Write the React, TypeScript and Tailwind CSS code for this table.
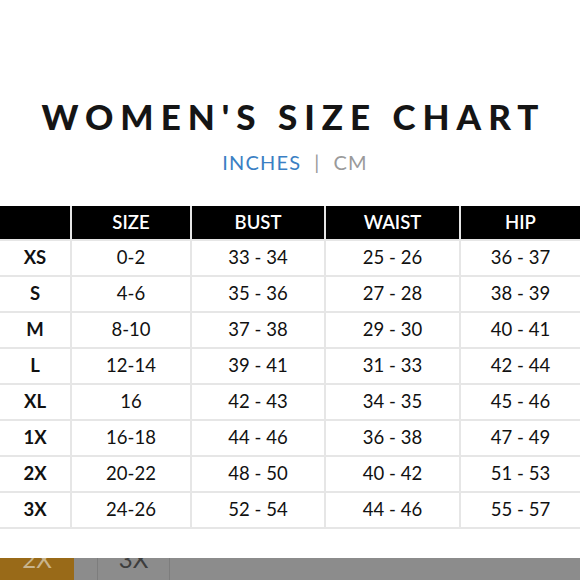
const rows = [
  ['XS', '0-2', '33 - 34', '25 - 26', '36 - 37'],
  ['S', '4-6', '35 - 36', '27 - 28', '38 - 39'],
  ['M', '8-10', '37 - 38', '29 - 30', '40 - 41'],
  ['L', '12-14', '39 - 41', '31 - 33', '42 - 44'],
  ['XL', '16', '42 - 43', '34 - 35', '45 - 46'],
  ['1X', '16-18', '44 - 46', '36 - 38', '47 - 49'],
  ['2X', '20-22', '48 - 50', '40 - 42', '51 - 53'],
  ['3X', '24-26', '52 - 54', '44 - 46', '55 - 57'],
];

const headers = ['', 'SIZE', 'BUST', 'WAIST', 'HIP'];

export default function App() {
  return (
    <div className="w-[580px] h-[580px] bg-white overflow-hidden flex flex-col font-['Lato',sans-serif]">
      {/* title */}
      <div className="pt-[96px] text-center">
        <h1 className="text-[35px] leading-[40px] font-black tracking-[0.2em] text-[#151515] pl-[0.2em]">
          WOMEN'S SIZE CHART
        </h1>
        <div className="mt-[14px] pl-[10px] text-[20px] leading-[24px] tracking-[0.06em]">
          <span className="text-[#3a7fc4]">INCHES</span>
          <span className="text-[#9a9a9a] mx-[13px]">|</span>
          <span className="text-[#9a9a9a]">CM</span>
        </div>
      </div>

      {/* table */}
      <div className="mt-[32px] grid grid-cols-[70px_118px_132px_133px_1fr] gap-[2px] bg-[#e6e6e6] pb-[2px]">
        {headers.map((h, i) => (
          <div
            key={i}
            className="h-[33px] bg-black text-white flex items-center justify-center text-[18.5px] font-semibold"
          >
            {h}
          </div>
        ))}
        {rows.map((r) =>
          r.map((c, i) => (
            <div
              key={r[0] + i}
              className={`h-[34px] bg-white text-[#111] flex items-center justify-center text-[18.5px] ${
                i === 0 ? 'font-bold' : ''
              }`}
            >
              {c}
            </div>
          ))
        )}
      </div>

      <div className="flex-1" />

      {/* bar at the bottom edge, cut off by the frame like in the screenshot */}
      <div className="h-[22px] bg-[#8c8c8c] flex overflow-hidden">
        <div className="w-[74px] bg-[#996a18] flex justify-center">
          <span className="-mt-[14px] text-[24px] leading-[30px] text-[#c8b48e]">2X</span>
        </div>
        <div className="w-[23px]" />
        <div className="w-[73px] border-x border-[#7d7d7d] flex justify-center">
          <span className="-mt-[14px] text-[24px] leading-[30px] text-[#3d3d3d]">3X</span>
        </div>
      </div>
    </div>
  );
}
